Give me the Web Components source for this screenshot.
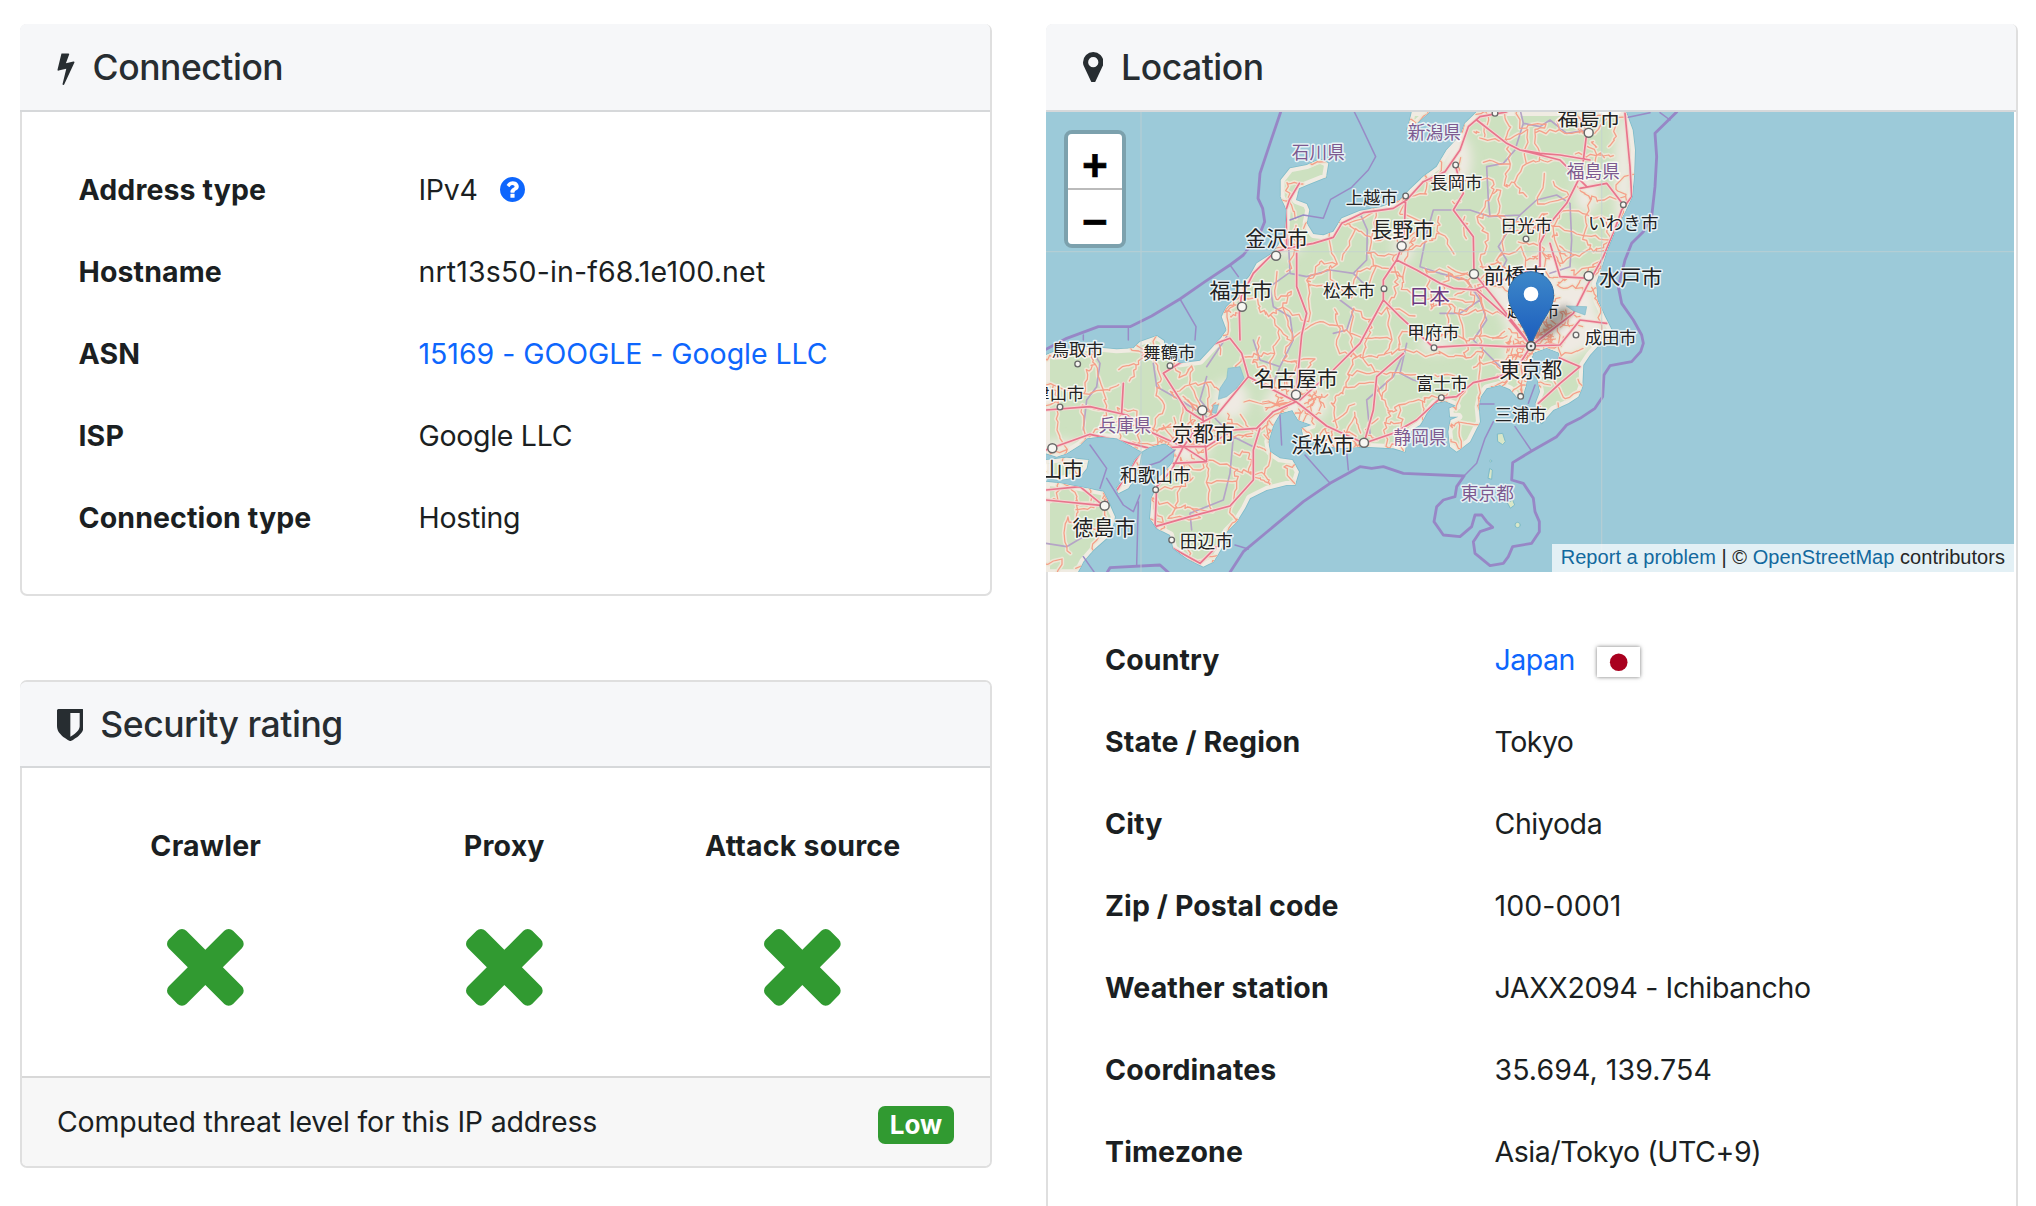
<!DOCTYPE html>
<html lang="en">
<head>
<meta charset="utf-8">
<title>IP address details</title>
<style>
  html, body { margin: 0; height: 1206px; overflow: hidden; background: #fff; }
  body { font-family: Inter, "Liberation Sans", sans-serif; font-size: 28.5px; color: #1b1f22; }
</style>
</head>
<body>
<ip-page></ip-page>
<script>
const def = (name, html, init) => customElements.define(name, class extends HTMLElement {
  constructor() {
    super();
    const t = document.createElement('template');
    t.innerHTML = html;
    this.attachShadow({ mode: 'open' }).append(t.content.cloneNode(true));
  }
  connectedCallback() { if (init) init.call(this, this.shadowRoot); }
});

const ICONS = {
  bolt: ['0 0 896 1792', 'M885 566q18 20 7 44l-540 1157q-13 25-42 25-4 0-14-2-17-5-25.500-19t-4.500-30l197-808-406 101q-4 1-12 1-18 0-31-11-18-15-13-39l201-825q4-14 16-23t28-9h328q19 0 32 12.500t13 29.500q0 8-5 18l-171 463 396-98q8-2 12-2 19 0 34 15z'],
  marker: ['0 128 1024 1536', 'M768 640q0-106-75-181t-181-75-181 75-75 181 75 181 181 75 181-75 75-181zm256 0q0 109-33 179l-364 774q-16 33-47.500 52t-67.500 19-67.500-19-46.500-52l-365-774q-33-70-33-179 0-212 150-362t362-150 362 150 150 362z'],
  shield: ['0 0 1280 1536', 'M1088 832v-640h-448v1137q119-63 213-137 235-184 235-360zm192-768v768q0 86-33.500 170.500t-83 150-118 127.500-126.500 103-121 77.500-89.500 49.500-42.500 20q-12 6-26 6t-26-6q-16-7-42.500-20t-89.500-49.500-121-77.500-126.500-103-118-127.500-83-150-33.500-170.500v-768q0-26 19-45t45-19h1152q26 0 45 19t19 45z'],
  times: ['110 366 1188 1188', 'M1298 1322q0 40-28 68l-136 136q-28 28-68 28t-68-28l-294-294-294 294q-28 28-68 28t-68-28l-136-136q-28-28-28-68t28-68l294-294-294-294q-28-28-28-68t28-68l136-136q28-28 68-28t68 28l294 294 294-294q28-28 68-28t68 28l136 136q28 28 28 68t-28 68l-294 294 294 294q28 28 28 68z'],
  question: ['0 128 1536 1536', 'M896 1376v-192q0-14-9-23t-23-9h-192q-14 0-23 9t-9 23v192q0 14 9 23t23 9h192q14 0 23-9t9-23zm256-672q0-88-55.500-163t-138.500-116-170-41q-243 0-371 213-15 24 8 42l132 100q7 6 19 6 16 0 25-12 53-68 86-92 34-24 86-24 48 0 85.500 26t37.500 59q0 38-20 61t-68 45q-63 28-115.500 86.500t-52.500 125.500v36q0 14 9 23t23 9h192q14 0 23-9t9-23q0-19 21.500-49.500t54.500-49.500q32-18 49-28.500t46-35 44.500-48 28-60.500 12.500-81zm384 192q0 209-103 385.500t-279.500 279.500-385.500 103-385.500-103-279.500-279.500-103-385.500 103-385.500 279.500-279.500 385.500-103 385.500 103 279.500 279.500 103 385.500z']
};

def('app-icon', `<style>:host{display:block;flex:none}svg{display:block;width:100%;height:100%;fill:currentColor}</style><svg><path/></svg>`, function (r) {
  const [box, d] = ICONS[this.getAttribute('name')];
  r.querySelector('svg').setAttribute('viewBox', box);
  r.querySelector('path').setAttribute('d', d);
});

def('info-card', `<style>
  :host{display:block;box-sizing:border-box;border:2px solid #dfdfdf;border-radius:7px;background:#fff}
  :host([flush]){border-top:0}
  header{display:flex;align-items:center;box-sizing:border-box;height:86px;margin-left:-2px;padding-left:36.6px;background:#f6f7f9;border-bottom:2px solid #d6d8da;color:#272d31;border-radius:6px 5px 0 0;font-size:35.5px;letter-spacing:-.47px;font-weight:480}
  :host([flush]) header{height:88px}
  h2{margin:0;padding-top:1.500px;font:inherit;line-height:1}
  footer{display:none;align-items:center;justify-content:space-between;box-sizing:border-box;height:90px;padding:2px 36px 0 35px;border-top:2px solid #d8d8d8;background:#f7f7f7;border-radius:0 0 5px 5px;letter-spacing:-.2px}
  :host([footed]) footer{display:flex}
</style><header><slot name="icon"></slot><h2><slot name="title"></slot></h2></header><slot></slot><footer><slot name="footer"></slot></footer>`);

def('info-row', `<style>
  :host{display:grid;grid-template-columns:var(--label-width,340px) 1fr;align-items:center;height:82px;white-space:nowrap}
  .k{font-weight:660;letter-spacing:.12px}
  .v{display:flex;align-items:center;letter-spacing:var(--value-spacing,-.3px)}
</style><div class="k"><slot name="label"></slot></div><div class="v"><slot></slot></div>`);

def('text-link', `<style>:host{display:block}a{color:#0d66fd;text-decoration:none}</style><a href="#"><slot></slot></a>`);
def('country-flag', `<style>:host{display:block;width:43px;height:30px;background:#fff;box-shadow:0 0 4px #777}svg{display:block}</style><svg width="43" height="30"><circle cx="21.700" cy="15.300" r="8.800" fill="#a9001f"/></svg>`);
def('level-badge', `<style>:host{display:flex;align-items:center;justify-content:center;width:76px;height:38px;border-radius:7px;background:#319a31;color:#fff;font-size:26px;font-weight:750;letter-spacing:0}</style><slot></slot>`);
def('check-item', `<style>:host{display:flex;flex-direction:column;align-items:center;gap:66px;white-space:nowrap;font-weight:660;letter-spacing:.2px}div{line-height:34px}app-icon{width:76.700px;height:76.700px;color:#319a31}</style><div><slot></slot></div><app-icon name="times"></app-icon>`);

def('zoom-control', `<style>
  :host{display:flex;flex-direction:column;border:4px solid rgba(0,0,0,.2);border-radius:8px;background-clip:padding-box}
  span{display:block;width:54px;height:38px;padding-top:16px;background:#fff;color:#000;text-align:center;font:bold 44px/38px "Liberation Mono",monospace;-webkit-text-stroke:.6px #000}
  .in{border-bottom:2px solid #bbb;border-radius:4px 4px 0 0}
  .out{border-radius:0 0 4px 4px}
</style><span class="in">+</span><span class="out">−</span>`);

/* Map geometry: three units per CSS pixel. */
const LAND = [
  'M18 765L60 748 150 740 230 748 280 745 300 725 350 708 372 722 375 760 420 790 480 782 510 750 545 712 560 690 545 650 560 620 590 590 600 560 628 530 650 490 700 458 735 405 740 330 722 290 722 240 750 205 800 195 840 178 865 190 858 232 800 255 777 265 768 300 800 312 808 330 800 370 820 402 850 406 880 395 905 355 960 332 1020 322 1080 300 1110 268 1150 230 1190 200 1220 150 1262 105 1275 70 1310 36 1758 36 1778 90 1785 150 1782 230 1776 290 1755 335 1728 385 1703 445 1685 500 1668 550 1672 600 1695 650 1720 700 1710 720 1680 732 1650 765 1630 795 1627 860 1615 890 1585 910 1540 930 1505 970 1490 955 1487 910 1500 875 1492 835 1510 800 1555 780 1558 758 1520 743 1480 758 1466 800 1458 855 1448 890 1430 890 1410 868 1380 855 1340 865 1322 890 1316 920 1320 965 1290 1025 1250 1055 1230 1040 1225 995 1232 960 1255 950 1230 950 1228 925 1250 918 1215 903 1185 910 1160 940 1140 975 1118 988 1100 1015 1095 1055 1060 1045 970 1040 900 1045 845 1035 790 1010 785 985 815 975 775 960 757 930 720 940 700 975 685 1025 690 1055 720 1075 757 1080 777 1115 765 1155 740 1155 680 1170 630 1195 615 1225 590 1265 560 1295 545 1345 520 1385 490 1400 440 1375 400 1345 390 1305 350 1285 330 1255 335 1195 348 1165 340 1145 375 1115 400 1085 405 1050 375 1030 330 1040 305 1055 270 1035 230 1015 180 1010 140 1015 120 1035 80 1060 50 1070 18 1060Z',
  'M305 1060L300 1085 290 1125 265 1165 235 1180 230 1165 265 1120 285 1080Z',
  'M18 1145L60 1150 140 1165 190 1175 205 1205 225 1250 220 1275 200 1315 160 1350 130 1385 112 1420 18 1420Z',
  'M18 1080L80 1073 145 1080 140 1105 120 1130 60 1140 18 1135Z',
  'M1115 36L1168 36 1130 70 1100 92 1110 60Z'
].join('');
const WATER = 'M565 805L600 800 612 835 590 865 560 890 535 898 540 865 560 835ZM522 915L535 915 528 940 518 938ZM775 275L800 262 806 290 780 302ZM1580 618L1640 620 1635 645 1600 632ZM1400 520L1405 525 1402 530Z';
const THICK = [
  'M722 36L690 130 660 220 654 295 668 325 674 365 660 400 610 465 570 495 495 545 420 597 335 648 270 680 175 680 80 715 18 748',
  'M1910 36L1845 100 1850 170 1845 260 1835 350 1810 395 1775 430 1755 480 1735 560 1745 610 1780 660 1805 705 1810 730 1802 755 1775 785 1710 797 1692 825 1688 890 1665 925 1620 955 1580 975 1550 1010 1475 1053 1418 1088 1415 1140 1450 1150 1480 1195 1485 1235 1498 1265 1498 1295 1475 1330 1418 1340 1405 1370 1390 1390 1350 1397 1305 1360 1300 1325 1320 1295 1358 1282 1340 1265 1325 1245 1305 1245 1295 1280 1260 1310 1210 1305 1182 1265 1190 1220 1210 1200 1245 1190 1250 1160 1272 1128 1090 1120 1030 1100 995 1105 960 1100 870 1150 790 1205 700 1280 610 1355 568 1420',
  'M200 1420L210 1403 360 1395 388 1420'
].join('');
const THIN = 'M943 36L960 70 1007 170 985 210 935 262 872 298 850 355 790 345 750 360M420 597L468 680 465 720M265 685V720M570 495L595 530M1360 965L1335 1015 1310 1090 1272 1128M1425 980L1475 1053M1320 912H1362M1485 855L1465 910M795 1065L870 1150M920 1055L925 1110M585 1335L625 1347M150 1035L200 1105 180 1165M200 1135L250 1215 280 1235 300 1185M295 1205L290 1395M130 1370L165 1420M405 1050L360 1085 300 1105M720 945L725 1035M130 705V720M1765 52L1830 38M1860 38L1890 60';
const INLAND = 'M960 340L982 390 980 480 940 520 870 510 800 530 750 520 745 420M745 520L690 560 700 620 750 650 760 720 720 800M940 520L980 560M900 600L940 630 920 690 880 700M1442 36L1450 70 1500 80 1530 60 1580 100 1640 90M1450 70L1425 150 1390 190 1340 200 1345 300 1350 350 1290 330M1345 350L1440 345 1490 300 1550 285 1590 310 1595 420 1590 500 1530 520M1440 345L1400 400 1375 440 1400 480 1380 520M1290 330L1180 330 1160 400 1140 500 1200 520 1280 540 1320 600 1260 640 1200 640M1100 730L1080 820 1120 840 1160 850M1090 760L1060 830 980 900 990 1000M1320 600L1340 660 1300 720 1380 800M150 740L180 790 170 860 140 900 130 990M340 790L350 860 420 900 500 950M500 830L480 900 530 960 580 1010 640 1040M580 1010L570 1120 550 1200 450 1240 455 1290M18 1330L80 1340 130 1310M560 710L500 800M640 720L660 780 720 800 700 850';
const MAIN = 'M600 720L598 640 604 590 640 520 700 460 740 445 820 430 880 412 905 370 970 338 1060 325 1100 300 1150 245 1215 215 1260 150 1285 80 1320 50 1400 36M740 440L738 330 748 300 778 250M1097 300L1092 400 1085 440 1070 480 1130 510 1200 550 1240 565 1310 570 1400 650 1473 738M1070 480L1030 540 1030 600 1080 650 1180 742 1300 735 1400 740 1473 738M1247 200L1270 280 1240 330 1300 410 1302 520 1360 590 1430 680 1473 738M1640 100L1625 220 1580 310 1530 370 1500 430 1500 500 1470 600 1473 738M1755 40L1770 200 1775 290 1745 330 1720 400 1690 470 1640 560 1600 640 1473 738M1310 60L1400 130 1440 150 1500 160 1560 165 1650 180M1750 314L1700 250 1620 265M1473 738L1440 790 1380 830 1300 848 1250 890 1200 895 1130 960 1060 1000 972 1030 860 978 800 930 768 905 700 935 650 985 580 990 500 1040 440 1040 330 1045 250 1025 150 1003 60 1035 18 1050M768 905L700 870 625 830 600 860 530 945 480 970 430 1040M570 715L605 760 625 830M1030 600L960 730 880 810 780 900M18 930L150 920 260 945 340 1000 430 1040M430 1040L395 1110 350 1160 345 1280 390 1340 480 1390 530 1340M345 1280L450 1250 570 1218 640 1140 640 1050 660 985M768 884L785 705 800 640 770 560 770 460M370 820L440 930 487 960M250 850L245 940M370 820L500 740 570 715M487 931L500 1080M430 1040L500 1085 400 1090M18 1170L120 1160 190 1217 225 1180 300 1060M18 1200L190 1217M1530 430L1560 530 1650 535M1440 150L1560 180 1640 260M972 1030L1000 930 1010 830 1090 760M1302 570L1500 500M1473 738L1560 735 1620 660 1700 670M1473 800L1470 870M1495 910L1560 850 1620 800 1550 770';
const CITIES = [[1473,738,24],[1430,690,14],[1500,640,12],[1440,820,12],[768,900,18],[430,1045,20],[490,950,10],[330,1030,8],[970,1010,6],[190,1215,6],[1640,540,6],[1640,110,6],[1090,440,6],[1310,540,8],[720,450,6],[600,610,6],[660,1000,8],[1530,440,8],[860,960,8],[1300,60,6],[1560,700,10]];
const LABELS = [
  ['石川県',835,157,53,1],['金沢市',710,415,63],['福井市',603,570,63],['松本市',927,573,52],['上越市',995,293,52],['新潟県',1183,98,53,1],['長岡市',1249,247,52],['長野市',1088,388,63],['福島市',1647,52,63],['福島県',1660,215,53,1],['日光市',1458,378,52],['いわき市',1750,370,53],['前橋市',1425,527,63],['水戸市',1772,533,63],['日本',1168,588,62,2],['越谷市',1480,632,52],['甲府市',1180,697,52],['成田市',1712,712,52],['鳥取市',113,748,52],['舞鶴市',388,757,52],['名古屋市',768,834,63],['津山市',55,880,52],['兵庫県',255,978,53,1],['京都市',490,1000,63],['浜松市',848,1033,63],['岡山市',36,1108,63],['和歌山市',346,1128,53],['徳島市',192,1283,63],['田辺市',499,1325,53],['東京都',1472,808,63],['富士市',1206,850,52],['三浦市',1442,945,52],['静岡県',1140,1012,53,1],['東京都',1342,1180,53,1]
];
const BIG = [[708,467],[606,620],[1085,438],[1646,98],[1302,522],[1646,528],[487,931],[768,884],[972,1028],[37,1045],[194,1217]];
const SMALL = [[1247,195],[1097,288],[1458,417],[1750,314],[1032,566],[1608,705],[1182,743],[1204,893],[1442,889],[113,792],[390,797],[60,921],[347,1169],[395,1320],[1365,40]];

/* Local roads: a jittered mesh with a fixed seed, clipped to the land shape. */
function localRoads() {
  let s = 77;
  const rnd = () => (s = (s * 1103515245 + 12345) % 2147483648) / 2147483648;
  const step = 58, nodes = [], out = [];
  for (let j = 0; j < 26; j++) { nodes[j] = []; for (let i = 0; i < 34; i++) nodes[j][i] = [i * step + (rnd() - .5) * 56, j * step + (rnd() - .5) * 56]; }
  const line = (a, b, w) => {
    let d = `M${a[0].toFixed(0)} ${a[1].toFixed(0)}L`;
    for (let k = 1; k < 5; k++) d += `${(a[0] + (b[0] - a[0]) * k / 5 + (rnd() - .5) * w).toFixed(0)} ${(a[1] + (b[1] - a[1]) * k / 5 + (rnd() - .5) * w).toFixed(0)} `;
    out.push(d + `${b[0].toFixed(0)} ${b[1].toFixed(0)}`);
  };
  for (let j = 0; j < 25; j++) for (let i = 0; i < 33; i++) {
    if (rnd() < .55) line(nodes[j][i], nodes[j][i + 1], 15);
    if (rnd() < .55) line(nodes[j][i], nodes[j + 1][i], 15);
  }
  for (const [x, y, n] of CITIES) for (let k = 0; k < n; k++) {
    const t = rnd() * 6.283, u = t + (rnd() - .5) * 1.5, q = 12 + rnd() * 30, r = 40 + rnd() * 60;
    line([x + Math.cos(t) * q, y + Math.sin(t) * q], [x + Math.cos(u) * r, y + Math.sin(u) * r], 10);
  }
  return out.join('');
}

def('map-view', `<style>
  :host{display:block;position:relative;height:460px;overflow:hidden;background:#9ccad9}
  svg{display:block;width:100%;height:100%}
  text{font-family:"Noto Sans CJK JP",sans-serif;text-anchor:middle;dominant-baseline:central;paint-order:stroke;stroke:#fff;stroke-opacity:.75;stroke-width:9;stroke-linejoin:round;fill:#222}
  zoom-control{position:absolute;left:18px;top:18px}
  .attribution{position:absolute;right:0;bottom:0;height:28px;box-sizing:border-box;padding:0 9px;background:rgba(255,255,255,.72);font:20px/26px "Liberation Sans",sans-serif;letter-spacing:.04px;color:#262626;white-space:nowrap}
  a{color:#13699e;text-decoration:none}
</style>
<svg viewBox="18 36 2904 1380" preserveAspectRatio="none" fill="none" stroke-linejoin="round" stroke-linecap="round">
  <defs>
    <clipPath id="land"><path d="${LAND}"/></clipPath>
    <filter id="soft" x="-30%" y="-30%" width="160%" height="160%"><feGaussianBlur stdDeviation="16"/></filter>
    <filter id="shade" x="-100%" y="-100%" width="300%" height="300%"><feGaussianBlur stdDeviation="11"/></filter>
    <linearGradient id="pin" x2="0" y2="1"><stop stop-color="#3e88c9"/><stop offset="1" stop-color="#1a5bbd"/></linearGradient>
  </defs>
  <path d="${LAND}" fill="#cde1c0" stroke="#7fbcc9" stroke-width="5"/>
  <g clip-path="url(#land)">
    <path d="${LAND}" stroke="#f0ebe2" stroke-width="24"/>
    <g fill="#efeae3" filter="url(#soft)">
      <path d="M1330 530L1450 500 1540 420 1580 500 1660 540 1670 640 1720 700 1600 770 1500 800 1390 790 1400 680Z"/>
      <ellipse cx="770" cy="910" rx="95" ry="65"/><ellipse cx="440" cy="1040" rx="70" ry="50"/><ellipse cx="1250" cy="180" rx="45" ry="80"/><ellipse cx="1090" cy="440" rx="30" ry="50"/><ellipse cx="1640" cy="280" rx="35" ry="60"/><ellipse cx="740" cy="440" rx="45" ry="25"/><ellipse cx="1190" cy="735" rx="50" ry="25"/><ellipse cx="60" cy="1045" rx="60" ry="25"/><ellipse cx="570" cy="900" rx="55" ry="60"/><ellipse cx="1750" cy="240" rx="25" ry="200"/>
    </g>
    <path class="local" stroke="#ece7d6" stroke-width="13"/>
    <path d="${INLAND}" stroke="#b5a4c6" stroke-width="5"/>
    <path class="local" stroke="#f59f88" stroke-width="3.800"/>
    <path d="${MAIN}" stroke="#f3d7d2" stroke-width="11"/>
    <path d="${MAIN}" stroke="#e8758c" stroke-width="5"/>
    <path d="${WATER}" fill="#9ccad9" stroke="#7fbcc9" stroke-width="2"/>
  </g>
  <g fill="#d9e7c8" stroke="#7fbcc9" stroke-width="3"><path d="M1373 1002L1388 1000 1396 1025 1388 1034 1374 1025Z"/><path d="M1350 1106L1357 1110 1355 1138 1345 1135Z"/><circle cx="1352" cy="1083" r="3"/><path d="M1403 1208L1418 1200 1424 1215 1412 1224Z"/><circle cx="1433" cy="1275" r="8"/></g>
  <path d="${THIN}" stroke="#988bc6" stroke-width="4.500"/>
  <path d="${THICK}" stroke="#9787c6" stroke-width="8.500"/>
  <path d="M303 36V1416M18 455H2922M1685 36V1416" stroke="#c3d0d2" stroke-opacity=".6" stroke-width="4"/>
  <g class="dots" fill="#f7f6f2" stroke="#686868"></g>
  <g class="labels"></g>
  <ellipse cx="1538" cy="668" rx="68" ry="24" transform="rotate(-44 1538 668)" fill="#222" opacity=".38" filter="url(#shade)"/>
  <path d="M1473 738C1462 705 1445 675 1426 645C1412 622 1405 605 1405 583A68 68 0 0 1 1541 583C1541 605 1534 622 1520 645C1501 675 1484 705 1473 738Z" fill="url(#pin)" stroke="#2c6da8" stroke-width="3"/>
  <circle cx="1473" cy="582" r="22" fill="#fff"/>
  <circle cx="1473" cy="738" r="13" fill="#eee" stroke="#555" stroke-width="5"/><circle cx="1473" cy="738" r="4" fill="#555"/>
</svg>
<zoom-control></zoom-control>
<div class="attribution"><a href="#">Report a problem</a> | © <a href="#">OpenStreetMap</a> contributors</div>`, function (r) {
  const NS = 'http://www.w3.org/2000/svg', roads = localRoads();
  r.querySelectorAll('.local').forEach(p => p.setAttribute('d', roads));
  const add = (parent, tag, attrs, text) => {
    const el = document.createElementNS(NS, tag);
    for (const k in attrs) el.setAttribute(k, attrs[k]);
    if (text) el.textContent = text;
    parent.append(el);
  };
  const dots = r.querySelector('.dots'), labels = r.querySelector('.labels');
  BIG.forEach(([cx, cy]) => add(dots, 'circle', { cx, cy, r: 13.5, 'stroke-width': 4.5 }));
  SMALL.forEach(([cx, cy]) => add(dots, 'circle', { cx, cy, r: 8.5, 'stroke-width': 4 }));
  LABELS.forEach(([t, x, y, size, tone]) => add(labels, 'text', { x, y: y - 4, 'font-size': size, style: tone ? `fill:${tone === 1 ? '#7d5a90' : '#6d3a80'}` : '' }, t));
});

def('ip-page', `<style>
  :host{display:grid;grid-template-columns:972px 972px;column-gap:54px;box-sizing:border-box;height:1206px;padding:24px 18px 0 20px;overflow:hidden}
  .left{display:flex;flex-direction:column;gap:84px}
  .rows{padding:36px 58px 36px 56.500px}
  .location .rows{padding:46px 57px 60px;--label-width:389.500px}
  .checks{display:grid;grid-template-columns:repeat(3,298.500px);box-sizing:border-box;height:308px;padding:61px 0 0 34.500px}
  .q{width:25px;height:25px;margin-left:22.500px;color:#0d66fd}
  country-flag{margin:6px 0 0 22.500px}
  map-view{margin:0 2px 0 -2px}
  .location{height:1300px}
</style>
<div class="left">
  <info-card flush>
    <app-icon slot="icon" name="bolt" style="width:18px;height:34px;margin:2px 18px 0 0"></app-icon><span slot="title">Connection</span>
    <div class="rows">
      <info-row><span slot="label">Address type</span>IPv4<app-icon class="q" name="question"></app-icon></info-row>
      <info-row style="--value-spacing:.16px"><span slot="label">Hostname</span>nrt13s50-in-f68.1e100.net</info-row>
      <info-row style="--value-spacing:-.04px"><span slot="label">ASN</span><text-link>15169 - GOOGLE - Google LLC</text-link></info-row>
      <info-row><span slot="label">ISP</span>Google LLC</info-row>
      <info-row><span slot="label">Connection type</span>Hosting</info-row>
    </div>
  </info-card>
  <info-card footed>
    <app-icon slot="icon" name="shield" style="width:26.700px;height:32px;margin:2px 17px 0 0"></app-icon><span slot="title">Security rating</span>
    <div class="checks"><check-item>Crawler</check-item><check-item>Proxy</check-item><check-item>Attack source</check-item></div>
    <span slot="footer" style="margin-bottom:3px">Computed threat level for this IP address</span><level-badge slot="footer" style="margin-top:3px">Low</level-badge>
  </info-card>
</div>
<info-card flush class="location">
  <app-icon slot="icon" name="marker" style="width:20.500px;height:30.700px;margin-right:18px"></app-icon><span slot="title">Location</span>
  <map-view></map-view>
  <div class="rows">
    <info-row style="--value-spacing:-.5px"><span slot="label">Country</span><text-link>Japan</text-link><country-flag></country-flag></info-row>
    <info-row style="--value-spacing:-.5px"><span slot="label">State / Region</span>Tokyo</info-row>
    <info-row style="--value-spacing:-.4px"><span slot="label">City</span>Chiyoda</info-row>
    <info-row style="--value-spacing:.1px"><span slot="label">Zip / Postal code</span>100-0001</info-row>
    <info-row style="--value-spacing:-.34px"><span slot="label">Weather station</span>JAXX2094 - Ichibancho</info-row>
    <info-row style="--value-spacing:.08px"><span slot="label">Coordinates</span>35.694, 139.754</info-row>
    <info-row style="--value-spacing:-.42px"><span slot="label">Timezone</span>Asia/Tokyo (UTC+9)</info-row>
  </div>
</info-card>`);
</script>
</body>
</html>
